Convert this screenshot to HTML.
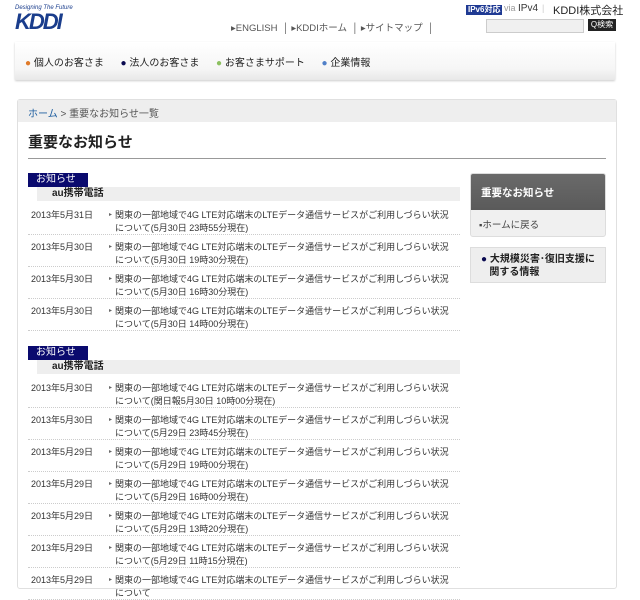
<!DOCTYPE html>
<html><head><meta charset="utf-8"><style>
*{margin:0;padding:0;box-sizing:border-box}
body{width:640px;height:579px;overflow:hidden;background:#fff;font-family:"Liberation Sans","Noto Sans CJK JP",sans-serif;color:#333;position:relative;font-size:10px}
.a{position:absolute;white-space:nowrap}
.logo{left:15px;top:5px}
.sec{background:#0a0a6e;color:#fff;font-size:10px;line-height:13px;padding:0 0 0 8px;width:60px;height:14px;left:28px}
.au{left:37px;width:423px;height:14px;background:#eee;font-weight:bold;font-size:10px;line-height:13px;padding:0 0 0 15px;color:#222}
.row{left:28px;width:432px;height:32px;border-bottom:1px dotted #ccc}
.row .d{position:absolute;left:3px;top:6px;font-size:9px;line-height:13px}
.row .t{position:absolute;left:87px;top:6px;font-size:9px;line-height:13px;white-space:normal;width:338px}
.row .t:before{content:"▸";position:absolute;left:-6px;font-size:6px;color:#666}
</style></head><body>
<div class="a logo">
<div style="font-size:6px;font-style:italic;color:#1a3d8c">Designing The Future</div>
<div style="font-size:22px;font-weight:bold;font-style:italic;color:#1a3d8c;letter-spacing:-2px;line-height:22px">KDDI</div>
</div>
<div class="a" style="left:466px;top:5px;font-size:8px;line-height:10px;background:#1f3a93;color:#fff;padding:0 2px;font-weight:bold">IPv6対応</div>
<div class="a" style="left:504px;top:3px;font-size:9px;color:#999">via <span style="color:#333;font-size:10px">IPv4</span></div>
<div class="a" style="left:542px;top:3px;font-size:9px;color:#ccc">|</div>
<div class="a" style="left:553px;top:2px;font-size:11px;color:#222">KDDI株式会社</div>
<div class="a" style="left:231px;top:20px;font-size:9.5px;color:#555">▸ENGLISH &nbsp;│ ▸KDDIホーム &nbsp;│ ▸サイトマップ &nbsp;│</div>
<div class="a" style="left:486px;top:19px;width:98px;height:14px;border:1px solid #ccc;background:#f0f0f0"></div>
<div class="a" style="left:588px;top:19px;width:28px;height:12px;background:#222;color:#fff;font-size:8px;line-height:12px;text-align:center">Q検索</div>
<div class="a" style="left:15px;top:42px;width:600px;height:38px;background:linear-gradient(#fff,#f6f6f6 70%,#e8e8e8);box-shadow:0 1px 2px #ccc"></div>
<div class="a" style="left:25px;top:54px;font-size:10px;color:#222"><span style="color:#e07b2a">●</span> 個人のお客さま &nbsp;&nbsp;&nbsp;&nbsp;&nbsp;<span style="color:#0a0a50">●</span> 法人のお客さま &nbsp;&nbsp;&nbsp;&nbsp;&nbsp;<span style="color:#8cc060">●</span> お客さまサポート &nbsp;&nbsp;&nbsp;&nbsp;&nbsp;<span style="color:#5080c8">●</span> 企業情報</div>
<div class="a" style="left:17px;top:99px;width:600px;height:490px;border:1px solid #e0e0e0;border-radius:3px"></div>
<div class="a" style="left:18px;top:100px;width:598px;height:22px;background:#eee"></div>
<div class="a" style="left:28px;top:105px;font-size:10px;color:#555"><span style="color:#1f5fa0">ホーム</span> &gt; 重要なお知らせ一覧</div>
<div class="a" style="left:28px;top:131px;font-size:15px;font-weight:bold;color:#222">重要なお知らせ</div>
<div class="a" style="left:28px;top:158px;width:578px;height:1px;background:#999"></div>

<div class="a sec" style="top:173px">お知らせ</div>
<div class="a au" style="top:187px">au携帯電話</div>
<div class="a row" style="top:203px"><span class="d">2013年5月31日</span><span class="t">関東の一部地域で4G LTE対応端末のLTEデータ通信サービスがご利用しづらい状況について(5月30日 23時55分現在)</span></div>
<div class="a row" style="top:235px"><span class="d">2013年5月30日</span><span class="t">関東の一部地域で4G LTE対応端末のLTEデータ通信サービスがご利用しづらい状況について(5月30日 19時30分現在)</span></div>
<div class="a row" style="top:267px"><span class="d">2013年5月30日</span><span class="t">関東の一部地域で4G LTE対応端末のLTEデータ通信サービスがご利用しづらい状況について(5月30日 16時30分現在)</span></div>
<div class="a row" style="top:299px"><span class="d">2013年5月30日</span><span class="t">関東の一部地域で4G LTE対応端末のLTEデータ通信サービスがご利用しづらい状況について(5月30日 14時00分現在)</span></div>

<div class="a sec" style="top:346px">お知らせ</div>
<div class="a au" style="top:360px">au携帯電話</div>
<div class="a row" style="top:376px"><span class="d">2013年5月30日</span><span class="t">関東の一部地域で4G LTE対応端末のLTEデータ通信サービスがご利用しづらい状況について(関日報5月30日 10時00分現在)</span></div>
<div class="a row" style="top:408px"><span class="d">2013年5月30日</span><span class="t">関東の一部地域で4G LTE対応端末のLTEデータ通信サービスがご利用しづらい状況について(5月29日 23時45分現在)</span></div>
<div class="a row" style="top:440px"><span class="d">2013年5月29日</span><span class="t">関東の一部地域で4G LTE対応端末のLTEデータ通信サービスがご利用しづらい状況について(5月29日 19時00分現在)</span></div>
<div class="a row" style="top:472px"><span class="d">2013年5月29日</span><span class="t">関東の一部地域で4G LTE対応端末のLTEデータ通信サービスがご利用しづらい状況について(5月29日 16時00分現在)</span></div>
<div class="a row" style="top:504px"><span class="d">2013年5月29日</span><span class="t">関東の一部地域で4G LTE対応端末のLTEデータ通信サービスがご利用しづらい状況について(5月29日 13時20分現在)</span></div>
<div class="a row" style="top:536px"><span class="d">2013年5月29日</span><span class="t">関東の一部地域で4G LTE対応端末のLTEデータ通信サービスがご利用しづらい状況について(5月29日 11時15分現在)</span></div>
<div class="a row" style="top:568px"><span class="d">2013年5月29日</span><span class="t">関東の一部地域で4G LTE対応端末のLTEデータ通信サービスがご利用しづらい状況について</span></div>

<div class="a" style="left:470px;top:173px;width:136px;height:64px;border:1px solid #ddd;border-radius:3px;background:#f0f0f0;overflow:hidden">
<div style="height:36px;background:linear-gradient(#6a6a6a,#5a5a5a);color:#fff;font-weight:bold;font-size:10.5px;padding:11px 0 0 10px">重要なお知らせ</div>
<div style="font-size:9.5px;color:#444;padding:7px 0 0 8px">▪ホームに戻る</div>
</div>
<div class="a" style="left:470px;top:247px;width:136px;height:36px;border:1px solid #ddd;background:#eee;font-size:10px;font-weight:bold;color:#222;padding:5px 0 0 10px;line-height:13px;white-space:normal"><span style="color:#0a0a50">●</span> 大規模災害･復旧支援に<br>&nbsp;&nbsp;&nbsp;関する情報</div>
</body></html>
